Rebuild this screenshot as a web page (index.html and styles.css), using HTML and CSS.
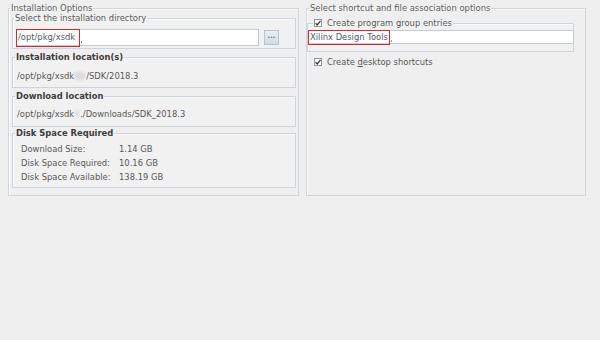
FILE: index.html
```html
<!DOCTYPE html>
<html>
<head>
<meta charset="utf-8">
<link rel="stylesheet" href="styles.css">
</head>
<body>
<div class="page">
  <fieldset class="panel left">
    <legend class="ptitle">Installation Options</legend>

    <fieldset class="box dirbox">
      <legend class="btitle">Select the installation directory</legend>
      <div class="dirrow">
        <div class="field dirfield"><span class="mark">/opt/pkg/xsdk</span><span class="caret"></span></div>
        <div class="browse">...</div>
      </div>
    </fieldset>

    <fieldset class="box infobox locbox">
      <legend class="btitle bold">Installation location(s)</legend>
      <div class="line">/opt/pkg/xsdk<span class="redact"></span>/SDK/2018.3</div>
    </fieldset>

    <fieldset class="box infobox dlbox">
      <legend class="btitle bold">Download location</legend>
      <div class="line">/opt/pkg/xsdk<span class="redact small"></span>./Downloads/SDK_2018.3</div>
    </fieldset>

    <fieldset class="box diskbox">
      <legend class="btitle bold disktitle">Disk Space Required</legend>
      <div class="disk">
        <span>Download Size:</span><span>1.14 GB</span>
        <span>Disk Space Required:</span><span>10.16 GB</span>
        <span>Disk Space Available:</span><span>138.19 GB</span>
      </div>
    </fieldset>
  </fieldset>

  <fieldset class="panel right">
    <legend class="ptitle rtitle">Select shortcut and file association options</legend>
    <fieldset class="box groupbox">
      <legend class="btitle cbtitle"><span class="cb"><svg viewBox="0 0 8 8" width="8" height="8"><path d="M1.6 4.2 L3.2 5.9 L6.5 1.8" fill="none" stroke="#3a3a3a" stroke-width="1.3"/></svg></span><span>Create program group entries</span></legend>
      <div class="field groupfield"><span class="mark">Xilinx Design Tools</span><span class="caret"></span></div>
    </fieldset>
    <div class="cbrow"><span class="cb"><svg viewBox="0 0 8 8" width="8" height="8"><path d="M1.6 4.2 L3.2 5.9 L6.5 1.8" fill="none" stroke="#3a3a3a" stroke-width="1.3"/></svg></span><span>Create <u>d</u>esktop shortcuts</span></div>
  </fieldset>
</div>
</body>
</html>
```

FILE: styles.css
```css
html, body {
  margin: 0;
  padding: 0;
  background: #efefef;
}
body {
  width: 600px;
  height: 340px;
  overflow: hidden;
  font-family: "DejaVu Sans", sans-serif;
  font-size: 8.4px;
  color: #585858;
}
.page {
  display: flex;
  align-items: flex-start;
  gap: 7px;
  padding: 3px 0 0 8px;
}
fieldset {
  margin: 0;
  min-width: 0;
}
legend {
  line-height: 10px;
  padding: 0 1px;
}
.panel {
  box-sizing: border-box;
  border: 1px solid #cfd7df;
  box-shadow: inset 1px 1px 0 #fafbfc;
}
.left {
  width: 291px;
  padding: 0 2px 7px 3px;
}
.right {
  width: 280px;
  height: 193px;
  padding: 5px 11px 0 0;
}
.ptitle {
  color: #5e5e5e;
  margin-left: -2px;
}
.rtitle {
  margin-left: 2px;
}
.box {
  border: 1px solid #ccd5de;
  box-shadow: inset 1px 1px 0 #f8f9fb;
  background: #f1f1f1;
}
.btitle {
  color: #585858;
  margin-left: -2px;
}
.bold {
  font-weight: bold;
  color: #3c3c3c;
}
.disktitle {
  margin-left: -6px;
}
.dirbox {
  padding: 6px 3px 2px 3px;
}
.dirrow {
  display: flex;
  align-items: center;
  gap: 5px;
}
.field {
  box-sizing: border-box;
  background: #ffffff;
  border: 1px solid #c3ccd5;
  display: flex;
  align-items: center;
}
.dirfield {
  width: 243px;
  height: 17px;
}
.mark {
  box-sizing: border-box;
  border: 1.6px solid #d62a2a;
  padding: 0 1px 0 1px;
  height: 16px;
  line-height: 13px;
  color: #505a68;
}
.dirfield .mark {
  width: 64px;
  margin-left: -1px;
  height: 18px;
  line-height: 14px;
}
.caret {
  display: inline-block;
  width: 1px;
  height: 2px;
  background: #999;
  margin-left: 1px;
  margin-top: 8px;
}
.browse {
  box-sizing: border-box;
  width: 15px;
  height: 15px;
  border: 1px solid #b7c3cf;
  background: linear-gradient(#e9eef3, #d3dbe4);
  color: #5a76a0;
  font-size: 7px;
  line-height: 10px;
  text-align: center;
  font-weight: bold;
}
.infobox {
  margin-top: 3px;
  padding: 9px 3px 6px 4px;
}
.dlbox {
  padding-top: 8px;
  padding-bottom: 7px;
}
.line {
  line-height: 10px;
}
.redact {
  display: inline-block;
  width: 10px;
  height: 8px;
  background: #dcdcdc;
  vertical-align: -1px;
  margin: 0 1px;
  filter: blur(1px);
}
.redact.small {
  width: 4px;
  background: #e2e2e2;
}
.diskbox {
  margin-top: 1px;
  padding: 4px 3px 3px 8px;
}
.disk {
  display: grid;
  grid-template-columns: 98px auto;
  line-height: 14px;
}
.groupbox {
  padding: 2px 0 7px 0;
  margin-left: 0;
}
.cbtitle {
  margin-left: 5px;
  display: flex;
  align-items: center;
}
.cb {
  box-sizing: border-box;
  width: 8px;
  height: 8px;
  border: 1px solid #8e96a0;
  background: #ffffff;
  display: inline-flex;
  margin-right: 5px;
  position: relative;
  flex: none;
}
.cb svg {
  position: absolute;
  left: -1px;
  top: -1px;
}
.groupfield {
  width: 266px;
  height: 14px;
  margin-left: 0;
}
.groupfield .mark {
  width: 82px;
  height: 15px;
  margin-left: -1px;
  line-height: 12px;
}
.cbrow {
  display: flex;
  align-items: center;
  margin: 5px 0 0 7px;
  line-height: 10px;
}
u {
  text-decoration-thickness: 1px;
}
```
